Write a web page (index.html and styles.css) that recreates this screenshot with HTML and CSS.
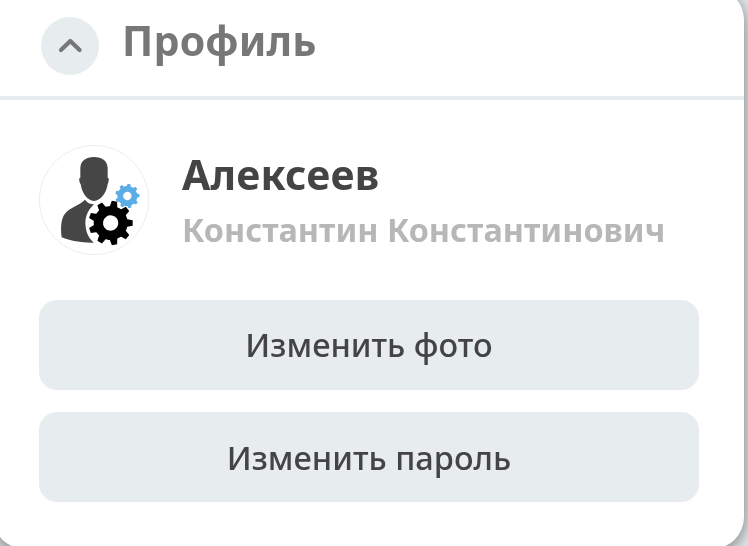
FILE: index.html
```html
<!DOCTYPE html>
<html lang="ru">
<head>
<meta charset="utf-8">
<title>Профиль</title>
<link rel="stylesheet" href="styles.css">
</head>
<body>
<main class="card">
  <header class="header">
    <button class="collapse" aria-label="Свернуть">
      <svg width="58" height="58" viewBox="0 0 58 58"><path d="M20 33 L29.3 24 L38.6 33"/></svg>
    </button>
    <h1 class="title">Профиль</h1>
  </header>
  <section class="body">
    <div class="person">
      <svg class="avatar" viewBox="0 0 330 330">
        <defs>
          <g id="teeth">
            <path id="tooth" d="M-12 -46 L-8 -66 H8 L12 -46 Z"/>
            <use href="#tooth" transform="rotate(40)"/>
            <use href="#tooth" transform="rotate(80)"/>
            <use href="#tooth" transform="rotate(120)"/>
            <use href="#tooth" transform="rotate(160)"/>
            <use href="#tooth" transform="rotate(200)"/>
            <use href="#tooth" transform="rotate(240)"/>
            <use href="#tooth" transform="rotate(280)"/>
            <use href="#tooth" transform="rotate(320)"/>
          </g>
        </defs>
        <circle class="ring" cx="165" cy="165" r="164"/>
        <path class="figure" d="M165 36 C190 36 206 48 206 70 V98 C211 98 210 108 206 118 C202 145 184 168 165 168 C146 168 129 145 125 118 C120 108 119 98 124 98 V70 C124 48 140 36 165 36 Z"/>
        <path class="figure" d="M138 164 C145 174 153 177 165 178 C143 199 137 220 140 245 C142 265 151 281 165 293 C130 294 95 288 68 277 C64 248 66 220 79 205 C93 187 121 181 138 164 Z"/>
        <g class="gear" transform="translate(215 234) rotate(10)">
          <circle r="37"/><use href="#teeth"/>
        </g>
        <g class="gear small" transform="translate(265 153) rotate(8) scale(.55)">
          <circle r="39"/><use href="#teeth"/>
        </g>
      </svg>
      <div class="names">
        <div class="surname">Алексеев</div>
        <div class="given">Константин Константинович</div>
      </div>
    </div>
    <button class="action">Изменить фото</button>
    <button class="action">Изменить пароль</button>
  </section>
</main>
</body>
</html>
```
FILE: styles.css
```css
* { box-sizing: border-box; }
html { height: 100%; overflow: hidden; }
body {
  height: 546px;
  margin: 0;
  overflow: hidden;
  background: #e7ecee;
  font-family: "Noto Sans", sans-serif;
}
.card {
  width: 751px;
  height: 561px;
  margin: -12px 0 0 -7px;
  border-radius: 32px;
  background: #fff;
  box-shadow: 0 4px 18px rgba(0, 0, 0, .5);
}
.header {
  display: flex;
  align-items: center;
  height: 112px;
  padding: 7px 0 0 48px;
  border-bottom: 4px solid #e7ecee;
}
.collapse {
  width: 58px;
  height: 58px;
  padding: 0;
  border: 0;
  border-radius: 50%;
  background: #e7ecee;
}
.collapse svg { display: block; }
.collapse path {
  fill: none;
  stroke: #777;
  stroke-width: 4.2;
  stroke-linecap: round;
  stroke-linejoin: round;
}
.title {
  margin: -12px 0 0 23px;
  color: #777;
  font-size: 41px;
  letter-spacing: .2px;
  line-height: 54px;
  font-weight: 700;
  will-change: transform;
}
.body { padding: 45px 45px 0 46px; }
.person { display: flex; height: 110px; margin-bottom: 45px; }
.avatar { width: 110px; height: 110px; flex: none; }
.ring { fill: #fff; stroke: #dce3f1; stroke-width: 2; }
.figure { fill: #464646; }
.gear { fill: #000; }
.gear circle { fill: none; stroke: #000; stroke-width: 28; }
.small { fill: #5bade6; }
.gear.small circle { stroke: #5bade6; stroke-width: 32; }
.names {
  margin-left: 33px;
  padding-top: 3px;
  white-space: nowrap;
  font-weight: 700;
  will-change: transform;
}
.surname { color: #444; font-size: 41px; letter-spacing: .2px; line-height: 53px; }
.given { color: #b7b7b7; font-size: 32.4px; line-height: 56px; }
.action {
  display: block;
  width: 100%;
  height: 90px;
  margin: 0 0 22px;
  padding: 0;
  border: 0;
  border-radius: 18px;
  background: #e7ecee;
  color: #444;
  font: 500 32.6px/90px "Noto Sans", sans-serif;
  will-change: transform;
}
.action:last-child { padding-top: 2px; line-height: 88px; }
```
